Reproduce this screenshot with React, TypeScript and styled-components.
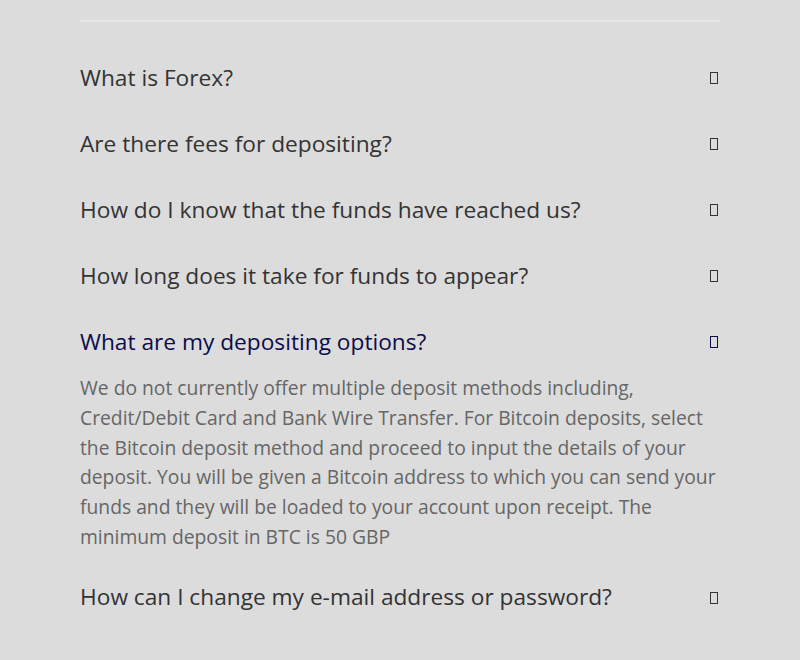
import { createGlobalStyle } from "styled-components";
import styled from "styled-components";

const faqs = [
  { question: "What is Forex?" },
  { question: "Are there fees for depositing?" },
  { question: "How do I know that the funds have reached us?" },
  { question: "How long does it take for funds to appear?" },
  {
    question: "What are my depositing options?",
    answer:
      "We do not currently offer multiple deposit methods including, Credit/Debit Card and Bank Wire Transfer. For Bitcoin deposits, select the Bitcoin deposit method and proceed to input the details of your deposit. You will be given a Bitcoin address to which you can send your funds and they will be loaded to your account upon receipt. The minimum deposit in BTC is 50 GBP",
    open: true,
  },
  { question: "How can I change my e-mail address or password?" },
];

const App = () => {
  return (
    <>
      <GlobalStyle />
      <StyledSection>
        <StyledDivider />
        <StyledList>
          {faqs.map((item) => (
            <StyledItem key={item.question}>
              <StyledQuestion $active={!!item.open}>
                <span>{item.question}</span>
                <StyledToggle $active={!!item.open} />
              </StyledQuestion>
              {item.open && <StyledAnswer>{item.answer}</StyledAnswer>}
            </StyledItem>
          ))}
        </StyledList>
      </StyledSection>
    </>
  );
};

export default App;

const GlobalStyle = createGlobalStyle`
  html, body {
    margin: 0;
    padding: 0;
    background: #dcdcdc;
  }
  body {
    font-family: "Open Sans", "Noto Sans", sans-serif;
  }
`;

const StyledSection = styled.section`
  width: 640px;
  margin: 0 auto;
  padding-top: 20px;
`;

const StyledDivider = styled.div`
  height: 2px;
  background: #e6e6e6;
  margin-bottom: 22px;
`;

const StyledList = styled.div`
  display: flex;
  flex-direction: column;
`;

const StyledItem = styled.div`
  display: flex;
  flex-direction: column;
`;

const StyledQuestion = styled.div<{ $active: boolean }>`
  height: 66px;
  display: flex;
  align-items: center;
  justify-content: space-between;
  font-size: 22.7px;
  color: ${({ $active }) => ($active ? "#0c0c4a" : "#333333")};
  cursor: pointer;
`;

const StyledToggle = styled.span<{ $active: boolean }>`
  width: 6px;
  height: 10px;
  margin: 2px 2px 0 0;
  border: 1px solid ${({ $active }) => ($active ? "#0c0c4a" : "#333333")};
`;

const StyledAnswer = styled.p`
  margin: -1px 0 12px;
  font-size: 19.3px;
  line-height: 29.8px;
  color: #666666;
`;
